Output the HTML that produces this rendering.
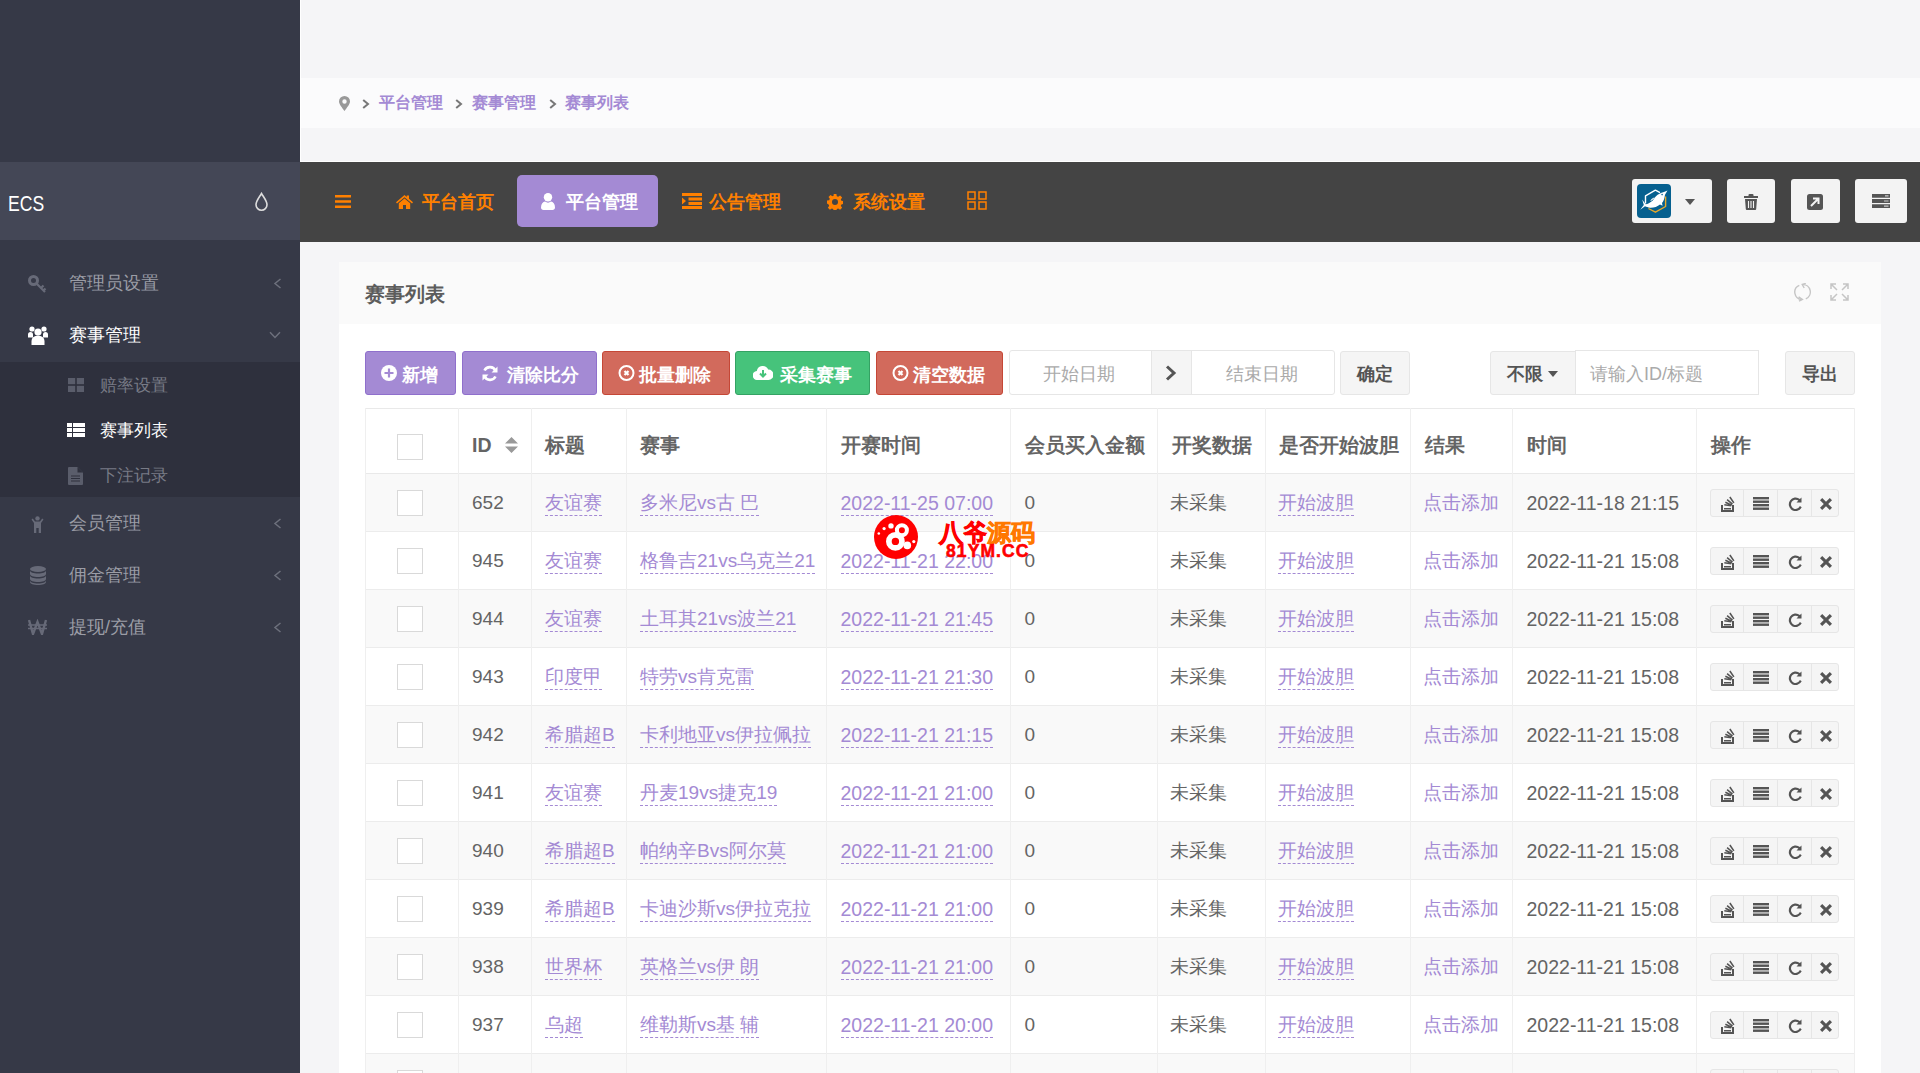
<!DOCTYPE html><html><head><meta charset="utf-8"><style>*{box-sizing:border-box;margin:0;padding:0}
html,body{width:1920px;height:1073px;overflow:hidden}
body{position:relative;background:#f5f5f7;font-family:"Liberation Sans",sans-serif;color:#646464}
.abs{position:absolute}
svg{position:absolute;display:block}
/* sidebar */
#sb{position:absolute;left:0;top:0;width:300px;height:1073px;background:#363947}
#sbh{position:absolute;left:0;top:162px;width:300px;height:78px;background:#444756}
#sbh .t{position:absolute;left:8px;top:186px;font-size:23px;line-height:32px;color:#fff}
.mi{position:absolute;left:69px;font-size:18px;line-height:24px;color:#9b9da6;white-space:nowrap}
.mi.on{color:#fff}
.si{position:absolute;left:100px;font-size:17px;line-height:24px;color:#787b86;white-space:nowrap}
.si.on{color:#fff}
#sub{position:absolute;left:0;top:362px;width:300px;height:135px;background:#2e303d}
/* top */
#wl{position:absolute;left:300px;top:0;width:1px;height:162px;background:#fff}
#bc{position:absolute;left:301px;top:78px;width:1619px;height:50px;background:#fbfbfc}
.bct{position:absolute;top:91px;font-size:16px;line-height:24px;color:#a48ad4;font-weight:bold;white-space:nowrap}
#nav{position:absolute;left:300px;top:162px;width:1620px;height:80px;background:#444}
#navl{position:absolute;left:300px;top:161px;width:1620px;height:1px;background:#fff}
.nt{position:absolute;top:189px;font-size:18px;line-height:26px;color:#ff8000;font-weight:bold;white-space:nowrap}
#navact{position:absolute;left:517px;top:175px;width:141px;height:52px;background:#a48ad4;border-radius:5px}
.rb{position:absolute;top:179px;height:44px;background:#f3f3f3;border-radius:3px}
/* panel */
#pn{position:absolute;left:339px;top:262px;width:1542px;height:811px;background:#fff}
#pnh{position:absolute;left:339px;top:262px;width:1542px;height:62px;background:#fafafa}
#pnt{position:absolute;left:365px;top:281px;font-size:20px;line-height:26px;color:#5c5c5c;font-weight:bold}
.btn{position:absolute;top:351px;height:44px;border-radius:3px;color:#fff;font-size:18px;font-weight:bold;line-height:42px;white-space:nowrap}
.btn span{position:absolute;top:2px}
.bp{background:#a48ad4;border:1px solid #8f6fcc}
.bd{background:#d26a5c;border:1px solid #c54736}
.bs{background:#46c37b;border:1px solid #34a263}
.ig{position:absolute;top:350px;height:45px;border:1px solid #e6e6e6;background:#fff;border-radius:3px}
.ph{position:absolute;font-size:18px;line-height:24px;color:#aaa;white-space:nowrap}
.gb{position:absolute;top:351px;height:44px;background:#f5f5f5;border:1px solid #e6e6e6;border-radius:3px;font-size:18px;font-weight:bold;color:#545454;line-height:44px;white-space:nowrap}
/* table */
.hrow{position:absolute;left:365px;width:1490px;background:#fff;border-top:1px solid #e9e9e9;border-bottom:1px solid #e9e9e9}
.row{position:absolute;left:365px;width:1490px;background:#fff;border-bottom:1px solid #ececec}
.row.odd{background:#f9f9f9}
.vl{position:absolute;width:1px;background:#efefef}
.th{position:absolute;font-size:19.5px;font-weight:bold;color:#646464;display:flex;align-items:center;white-space:nowrap;padding-top:9px}
.td{position:absolute;font-size:19px;color:#646464;display:flex;align-items:center;white-space:nowrap;padding-top:0px}
.td.lk,.td.pl{color:#a48ad4}
.td.lk span{border-bottom:1px dashed #a48ad4;line-height:24px}
.cb{position:absolute;width:26px;height:26px;border:1px solid #d9d9d9;background:#fff}
.ops{position:absolute;width:129px;height:28px;border:1px solid #e6e6e6;border-radius:3px;background:#f5f5f5}
.ops span{position:absolute;top:0;height:26px;border-right:1px solid #e6e6e6}
.ops svg{fill:#545454}
.o1{left:0;width:33px}.o2{left:33px;width:34px}.o3{left:67px;width:34px}.o4{left:101px;width:27px;border-right:none!important}
.o1 svg{left:9px;top:6px}.o2 svg{left:9px;top:7px}.o3 svg{left:10px;top:6px}.o4 svg{left:8px;top:8px}
/* watermark */
#wm{position:absolute;left:874px;top:515px;width:44px;height:44px;border-radius:50%;background:#f00}
.wmt{position:absolute;font-weight:bold;white-space:nowrap}

.dt{font-size:19.5px!important}
</style></head><body>
<svg width="0" height="0" style="position:absolute">
<defs>
<g id="i-so"><path d="M1 9h2v5h9V9h2v7H1z"/><path d="M4 12h7v1.6H4z M4.2 9.6l7 1 .2-1.6-7-1z M5 7l6.4 3 .7-1.5-6.4-3z M6.6 4.2l5.4 4.6 1-1.2L7.6 3z M9.2 1.5l4 5.8 1.3-.9-4-5.8z"/></g>
<g id="i-bars"><rect x="0" y="0" width="16" height="2.4"/><rect x="0" y="3.5" width="16" height="2.4"/><rect x="0" y="7" width="16" height="2.4"/><rect x="0" y="10.5" width="16" height="2.4"/></g>
<g id="i-rot"><path d="M13.5 1.5v5h-5l1.9-1.9A4.6 4.6 0 1 0 11.9 10l1.8 1.3A6.8 6.8 0 1 1 11.9 3z"/></g>
<g id="i-x"><path d="M2.2 0L6 3.8 9.8 0 12 2.2 8.2 6 12 9.8 9.8 12 6 8.2 2.2 12 0 9.8 3.8 6 0 2.2z"/></g>
</defs></svg>
<div id="sb"></div>
<div id="sbh"></div>
<div style="position:absolute;left:8px;top:189px;font-size:22px;line-height:30px;color:#fff;transform:scaleX(0.8);transform-origin:0 0">ECS</div>
<svg style="left:254px;top:192px" width="15" height="20" viewBox="0 0 15 20"><path d="M7.5 1.5C5.5 5 2 9 2 12.8A5.5 5.5 0 0 0 13 12.8C13 9 9.5 5 7.5 1.5Z" fill="none" stroke="#ddd" stroke-width="1.6"/></svg>
<div id="sub"></div>
<!-- menu -->
<svg style="left:28px;top:275px" width="19" height="18" viewBox="0 0 19 18"><circle cx="5.5" cy="5.5" r="4" fill="none" stroke="#676a78" stroke-width="3"/><path d="M8 8l9 9M13 13l2.5-2.5M15.5 15.5l2-2" stroke="#676a78" stroke-width="2.2"/></svg>
<div class="mi" style="top:271px">管理员设置</div>
<svg style="left:273px;top:278px" width="9" height="11" viewBox="0 0 9 11"><path d="M7.5 1L2 5.5 7.5 10" fill="none" stroke="#6d707c" stroke-width="1.5"/></svg>
<svg style="left:28px;top:326px" width="20" height="19" viewBox="0 0 20 19"><circle cx="4" cy="3" r="2.6" fill="#fff"/><circle cx="16" cy="3" r="2.6" fill="#fff"/><circle cx="10" cy="6" r="3.6" fill="#fff"/><path d="M0 8.5a2.5 2.5 0 0 1 5 0v3H0z M15 8.5a2.5 2.5 0 0 1 5 0v3h-5z M3.5 19v-4a6.5 5.5 0 0 1 13 0v4z" fill="#fff"/></svg>
<div class="mi on" style="top:323px">赛事管理</div>
<svg style="left:269px;top:331px" width="12" height="8" viewBox="0 0 12 8"><path d="M1 1.2L6 6.5 11 1.2" fill="none" stroke="#6d707c" stroke-width="1.5"/></svg>
<svg style="left:68px;top:378px" width="16" height="14" viewBox="0 0 16 14"><rect x="0" y="0" width="7.2" height="6.2" fill="#5a5d6b"/><rect x="8.8" y="0" width="7.2" height="6.2" fill="#5a5d6b"/><rect x="0" y="7.8" width="7.2" height="6.2" fill="#5a5d6b"/><rect x="8.8" y="7.8" width="7.2" height="6.2" fill="#5a5d6b"/></svg>
<div class="si" style="top:374px">赔率设置</div>
<svg style="left:67px;top:423px" width="18" height="14" viewBox="0 0 18 14"><path d="M0 0h5v4H0z M6 0h12v4H6z M0 5h5v4H0z M6 5h12v4H6z M0 10h5v4H0z M6 10h12v4H6z" fill="#fff"/></svg>
<div class="si on" style="top:419px">赛事列表</div>
<svg style="left:68px;top:467px" width="15" height="18" viewBox="0 0 15 18"><path d="M0 1a1 1 0 0 1 1-1h8.5L15 5.5V17a1 1 0 0 1-1 1H1a1 1 0 0 1-1-1z" fill="#5a5d6b"/><path d="M9.5 0v5.5H15" fill="#2e303d"/><path d="M3 9h9M3 11.5h9M3 14h9" stroke="#2e303d" stroke-width="1.2"/></svg>
<div class="si" style="top:464px">下注记录</div>
<svg style="left:31px;top:516px" width="13" height="17" viewBox="0 0 13 17"><circle cx="6.5" cy="2.4" r="2.2" fill="#676a78"/><path d="M0.5 3.5l1.3-.9L4 5.5h5l2.2-2.9 1.3.9L10 7v10H7.7v-5H5.3v5H3V7z" fill="#676a78"/></svg>
<div class="mi" style="top:511px">会员管理</div>
<svg style="left:273px;top:518px" width="9" height="11" viewBox="0 0 9 11"><path d="M7.5 1L2 5.5 7.5 10" fill="none" stroke="#6d707c" stroke-width="1.5"/></svg>
<svg style="left:30px;top:566px" width="16" height="19" viewBox="0 0 16 19"><ellipse cx="8" cy="3" rx="8" ry="3" fill="#676a78"/><path d="M0 4.5c0 1.7 3.6 3 8 3s8-1.3 8-3V8c0 1.7-3.6 3-8 3S0 9.7 0 8z M0 9.5c0 1.7 3.6 3 8 3s8-1.3 8-3V13c0 1.7-3.6 3-8 3s-8-1.3-8-3z M0 14.5c0 1.7 3.6 3 8 3s8-1.3 8-3V16c0 1.7-3.6 3-8 3s-8-1.3-8-3z" fill="#676a78"/></svg>
<div class="mi" style="top:563px">佣金管理</div>
<svg style="left:273px;top:570px" width="9" height="11" viewBox="0 0 9 11"><path d="M7.5 1L2 5.5 7.5 10" fill="none" stroke="#6d707c" stroke-width="1.5"/></svg>
<svg style="left:28px;top:619px" width="19" height="16" viewBox="0 0 19 16"><path d="M1 1l4 14 4.5-12 4.5 12 4-14" fill="none" stroke="#676a78" stroke-width="2.4"/><path d="M0 6h19M0 9.5h19" stroke="#676a78" stroke-width="1.6"/></svg>
<div class="mi" style="top:615px">提现/充值</div>
<svg style="left:273px;top:622px" width="9" height="11" viewBox="0 0 9 11"><path d="M7.5 1L2 5.5 7.5 10" fill="none" stroke="#6d707c" stroke-width="1.5"/></svg>

<div id="wl"></div>
<div id="bc"></div>
<svg style="left:339px;top:96px" width="11" height="15" viewBox="0 0 11 15"><path d="M5.5 0A5.5 5.5 0 0 0 0 5.5C0 8 3 11.5 5.5 15 8 11.5 11 8 11 5.5A5.5 5.5 0 0 0 5.5 0Zm0 3.3a2.2 2.2 0 1 1 0 4.4 2.2 2.2 0 0 1 0-4.4Z" fill="#999"/></svg>
<svg style="left:362px;top:99px" width="8" height="10" viewBox="0 0 8 10"><path d="M1.2 1L6 5 1.2 9" fill="none" stroke="#777" stroke-width="2"/></svg>
<div class="bct" style="left:379px">平台管理</div>
<svg style="left:455px;top:99px" width="8" height="10" viewBox="0 0 8 10"><path d="M1.2 1L6 5 1.2 9" fill="none" stroke="#777" stroke-width="2"/></svg>
<div class="bct" style="left:472px">赛事管理</div>
<svg style="left:549px;top:99px" width="8" height="10" viewBox="0 0 8 10"><path d="M1.2 1L6 5 1.2 9" fill="none" stroke="#777" stroke-width="2"/></svg>
<div class="bct" style="left:565px">赛事列表</div>

<div id="navl"></div>
<div id="nav"></div>
<svg style="left:335px;top:195px" width="16" height="13" viewBox="0 0 16 13"><path d="M0 0h16v2.6H0z M0 5.2h16v2.6H0z M0 10.4h16V13H0z" fill="#ff8000"/></svg>
<svg style="left:396px;top:195px" width="17" height="14" viewBox="0 0 17 14"><path d="M8.5 0L0 7.2 1 8.4 8.5 2.2 16 8.4 17 7.2 13 3.8V0.5h-2.3v1.4z M2.8 8.2L8.5 3.5 14.2 8.2V14H10V10H7V14H2.8z" fill="#ff8000"/></svg>
<div class="nt" style="left:422px">平台首页</div>
<div id="navact"></div>
<svg style="left:541px;top:193px" width="14" height="17" viewBox="0 0 14 17"><circle cx="7" cy="4.2" r="4.2" fill="#fff"/><path d="M0 14.5C0 11 2 9 4 8.6 5 9.4 6 9.7 7 9.7s2-.3 3-1.1C12 9 14 11 14 14.5 14 16 13 17 11.5 17h-9C1 17 0 16 0 14.5z" fill="#fff"/></svg>
<div class="nt" style="left:566px;color:#fff">平台管理</div>
<svg style="left:682px;top:193px" width="20" height="16" viewBox="0 0 20 16"><path d="M0 0h20v3H0z M6.5 4.5H20v3H6.5z M6.5 9H20v3H6.5z M0 13h20v3H0z M0 4.5l4 3.5-4 3.5z" fill="#ff8000"/></svg>
<div class="nt" style="left:709px">公告管理</div>
<svg style="left:827px;top:194px" width="16" height="16" viewBox="0 0 16 16"><path d="M6.6 0h2.8l.4 2.2 1.4.6 1.9-1.3 2 2-1.3 1.9.6 1.4 2.2.4v2.8l-2.2.4-.6 1.4 1.3 1.9-2 2-1.9-1.3-1.4.6-.4 2.2H6.6l-.4-2.2-1.4-.6-1.9 1.3-2-2 1.3-1.9-.6-1.4L0 9.4V6.6l2.2-.4.6-1.4-1.3-1.9 2-2 1.9 1.3 1.4-.6zM8 5a3 3 0 1 0 0 6 3 3 0 0 0 0-6z" fill="#ff8000"/></svg>
<div class="nt" style="left:853px">系统设置</div>
<svg style="left:967px;top:191px" width="20" height="19" viewBox="0 0 20 19"><path d="M1 1h7v7H1z M12 1h7v7h-7z M1 11h7v7H1z M12 11h7v7h-7z" fill="none" stroke="#ff8000" stroke-width="1.5"/></svg>

<div class="rb" style="left:1632px;width:80px"></div>
<div style="position:absolute;left:1637px;top:184px;width:34px;height:34px;background:#06608f;border-radius:4px"></div>
<svg style="left:1637px;top:184px" width="34" height="34" viewBox="0 0 34 34"><path d="M8.5 19.6V11.8L18.4 6.1 23 8.6" fill="none" stroke="#fff" stroke-width="1.4" stroke-linejoin="round"/><path d="M28.6 12.6V22.5L18.4 28.2 11.4 24.5" fill="none" stroke="#e8a92a" stroke-width="1.4" stroke-linejoin="round"/><path d="M3.2 25.8L6.8 21 5.2 15.5 8.6 20.2C10.5 20 13 19 15.8 16.5 17.5 13.5 19.5 11 23 9.4 25 8.6 27 8.2 30.5 6.6 29.5 8.5 28.5 9.6 27.9 11.2 27.5 14.5 26.6 17 25 19L25.6 21.8 23 20.6C20.5 22.8 16.5 24 13 23.8 11 23.6 9.5 22.6 8 22.2Z" fill="#fff"/><path d="M13.2 17C14 15.2 15.5 14 17.6 13.2 16.8 15 15.2 16.3 13.2 17Z" fill="#fff"/><circle cx="25.1" cy="10.6" r="0.8" fill="#06608f"/></svg>
<svg style="left:1685px;top:199px" width="10" height="6" viewBox="0 0 10 6"><path d="M0 0h10L5 6z" fill="#555"/></svg>
<div class="rb" style="left:1727px;width:48px"></div>
<svg style="left:1744px;top:194px" width="14" height="16" viewBox="0 0 14 16"><path d="M4.5 2V1a1 1 0 0 1 1-1h3a1 1 0 0 1 1 1v1H14v2H0V2z M1 5h12l-.8 10a1 1 0 0 1-1 1H2.8a1 1 0 0 1-1-1z" fill="#555"/><path d="M4.5 7v7M7 7v7M9.5 7v7" stroke="#f3f3f3" stroke-width="1.1"/></svg>
<div class="rb" style="left:1791px;width:49px"></div>
<svg style="left:1807px;top:194px" width="16" height="16" viewBox="0 0 16 16"><rect width="16" height="16" rx="2.5" fill="#555"/><path d="M4 12l7-7M6 4.5h5.5V10" fill="none" stroke="#f3f3f3" stroke-width="2"/></svg>
<div class="rb" style="left:1855px;width:52px"></div>
<svg style="left:1872px;top:194px" width="18" height="14" viewBox="0 0 18 14"><path d="M0 0h18v3.8H0z M0 5.1h18v3.8H0z M0 10.2h18V14H0z" fill="#555"/><path d="M13 1.9h3.5M12 7h4.5M12 12.1h4.5" stroke="#ccc" stroke-width="1.2"/></svg>

<div id="pn"></div>
<div id="pnh"></div>
<div id="pnt">赛事列表</div>
<svg style="left:1794px;top:283px" width="17" height="19" viewBox="0 0 17 19"><path d="M5.3 2.4A7.4 7.4 0 0 0 7.8 16.6 M8.6 1.6A7.4 7.4 0 0 1 11.8 15.8" fill="none" stroke="#c5c5c5" stroke-width="1.4"/><path d="M4.6 13.9L8.4 16.4 5 18.2 M11.8 0.3L8.2 1.5 10.2 5" fill="none" stroke="#c5c5c5" stroke-width="1.4"/></svg>
<svg style="left:1830px;top:283px" width="19" height="18" viewBox="0 0 19 18"><path d="M1 1l6 6M18 1l-6 6M1 17l6-6M18 17l-6-6 M1 6V1h5 M13 1h5v5 M1 12v5h5 M13 17h5v-5" fill="none" stroke="#c5c5c5" stroke-width="1.5"/></svg>

<div class="btn bp" style="left:365px;width:91px"><svg style="left:15px;top:13px" width="16" height="16" viewBox="0 0 16 16"><circle cx="8" cy="8" r="8" fill="#fff"/><path d="M8 3.5v9M3.5 8h9" stroke="#a48ad4" stroke-width="2.2"/></svg><span style="left:36px">新增</span></div>
<div class="btn bp" style="left:462px;width:135px"><svg style="left:19px;top:13px" width="16" height="17" viewBox="0 0 16 17"><path d="M13.5 6A6 6 0 0 0 2.5 5.5 M2.5 11a6 6 0 0 0 11 .5" fill="none" stroke="#fff" stroke-width="2.6"/><path d="M15.5 1.5v6h-6z M0.5 15.5v-6h6z" fill="#fff"/></svg><span style="left:44px">清除比分</span></div>
<div class="btn bd" style="left:602px;width:128px"><svg style="left:15px;top:12px" width="17" height="18" viewBox="0 0 17 18"><circle cx="8.5" cy="9" r="7" fill="none" stroke="#fff" stroke-width="2"/><path d="M6.5 7l4 4M10.5 7l-4 4" stroke="#fff" stroke-width="2.2"/></svg><span style="left:36px">批量删除</span></div>
<div class="btn bs" style="left:735px;width:135px"><svg style="left:17px;top:13px" width="20" height="15" viewBox="0 0 20 15"><path d="M4.5 15A4.5 4.5 0 0 1 3.8 6 6 6 0 0 1 15.2 4.6 5.2 5.2 0 0 1 15.5 15z" fill="#fff"/><path d="M10 5v6M7 8.5l3 3 3-3" fill="none" stroke="#46c37b" stroke-width="2"/></svg><span style="left:44px">采集赛事</span></div>
<div class="btn bd" style="left:876px;width:127px"><svg style="left:15px;top:12px" width="17" height="18" viewBox="0 0 17 18"><circle cx="8.5" cy="9" r="7" fill="none" stroke="#fff" stroke-width="2"/><path d="M6.5 7l4 4M10.5 7l-4 4" stroke="#fff" stroke-width="2.2"/></svg><span style="left:36px">清空数据</span></div>

<div class="ig" style="left:1009px;width:326px"></div>
<div style="position:absolute;left:1151px;top:351px;width:41px;height:43px;background:#f5f5f5;border-left:1px solid #e6e6e6;border-right:1px solid #e6e6e6"></div>
<svg style="left:1165px;top:365px" width="12" height="16" viewBox="0 0 12 16"><path d="M2 1.5L9 8 2 14.5" fill="none" stroke="#555" stroke-width="3"/></svg>
<div class="ph" style="left:1043px;top:362px">开始日期</div>
<div class="ph" style="left:1226px;top:362px">结束日期</div>
<div class="gb" style="left:1340px;width:70px"><span style="position:absolute;left:16px">确定</span></div>
<div class="gb" style="left:1490px;width:86px;border-radius:3px 0 0 3px"><span style="position:absolute;left:16px">不限</span></div>
<svg style="left:1548px;top:371px" width="10" height="6" viewBox="0 0 10 6"><path d="M0 0h10L5 6z" fill="#555"/></svg>
<div style="position:absolute;left:1575px;top:350px;width:184px;height:45px;border:1px solid #e6e6e6;background:#fff"></div>
<div class="ph" style="left:1590px;top:362px">请输入ID/标题</div>
<div class="gb" style="left:1785px;width:70px"><span style="position:absolute;left:16px">导出</span></div>

<div class="tbl">
<div class="hrow" style="top:408px;height:66px"></div>
<div class="row odd" style="top:474px;height:58px"></div>
<div class="row" style="top:532px;height:58px"></div>
<div class="row odd" style="top:590px;height:58px"></div>
<div class="row" style="top:648px;height:58px"></div>
<div class="row odd" style="top:706px;height:58px"></div>
<div class="row" style="top:764px;height:58px"></div>
<div class="row odd" style="top:822px;height:58px"></div>
<div class="row" style="top:880px;height:58px"></div>
<div class="row odd" style="top:938px;height:58px"></div>
<div class="row" style="top:996px;height:58px"></div>
<div class="row odd" style="top:1054px;height:58px"></div>
<div class="vl" style="left:364.5px;top:408px;height:665px"></div>
<div class="vl" style="left:457.5px;top:408px;height:665px"></div>
<div class="vl" style="left:530.5px;top:408px;height:665px"></div>
<div class="vl" style="left:625.5px;top:408px;height:665px"></div>
<div class="vl" style="left:826.0px;top:408px;height:665px"></div>
<div class="vl" style="left:1010.0px;top:408px;height:665px"></div>
<div class="vl" style="left:1157.0px;top:408px;height:665px"></div>
<div class="vl" style="left:1264.5px;top:408px;height:665px"></div>
<div class="vl" style="left:1410.0px;top:408px;height:665px"></div>
<div class="vl" style="left:1512.0px;top:408px;height:665px"></div>
<div class="vl" style="left:1696.0px;top:408px;height:665px"></div>
<div class="vl" style="left:1854.0px;top:408px;height:665px"></div>
<div class="cb" style="left:397px;top:434px"></div>
<div class="th" style="left:472.0px;top:408px;height:66px">ID</div>
<div class="th" style="left:545.0px;top:408px;height:66px">标题</div>
<div class="th" style="left:640.0px;top:408px;height:66px">赛事</div>
<div class="th" style="left:840.5px;top:408px;height:66px">开赛时间</div>
<div class="th" style="left:1024.5px;top:408px;height:66px">会员买入金额</div>
<div class="th" style="left:1171.5px;top:408px;height:66px">开奖数据</div>
<div class="th" style="left:1279.0px;top:408px;height:66px">是否开始波胆</div>
<div class="th" style="left:1424.5px;top:408px;height:66px">结果</div>
<div class="th" style="left:1526.5px;top:408px;height:66px">时间</div>
<div class="th" style="left:1710.5px;top:408px;height:66px">操作</div>
<svg class="sort" style="left:505px;top:437px" width="13" height="16" viewBox="0 0 13 16"><path d="M6.5 0L13 6.5H0Z M0 9.5H13L6.5 16Z" fill="#999"/></svg>
<div class="cb" style="left:397px;top:490px"></div>
<div class="td" style="left:472.0px;top:474px;height:58px"><span>652</span></div>
<div class="td lk" style="left:545.0px;top:474px;height:58px"><span>友谊赛</span></div>
<div class="td lk" style="left:640.0px;top:474px;height:58px"><span>多米尼vs古 巴</span></div>
<div class="td lk dt" style="left:840.5px;top:474px;height:58px"><span>2022-11-25 07:00</span></div>
<div class="td" style="left:1024.5px;top:474px;height:58px"><span>0</span></div>
<div class="td" style="left:1169.5px;top:474px;height:58px"><span>未采集</span></div>
<div class="td lk" style="left:1277.5px;top:474px;height:58px"><span>开始波胆</span></div>
<div class="td pl" style="left:1423.0px;top:474px;height:58px"><span>点击添加</span></div>
<div class="td dt" style="left:1526.5px;top:474px;height:58px"><span>2022-11-18 21:15</span></div>
<div class="ops" style="left:1710px;top:489px"><span class="o1"><svg width="15" height="16" viewBox="0 0 15 16"><use href="#i-so"/></svg></span><span class="o2"><svg width="16" height="13" viewBox="0 0 16 13"><use href="#i-bars"/></svg></span><span class="o3"><svg width="15" height="15" viewBox="0 0 15 15"><use href="#i-rot"/></svg></span><span class="o4"><svg width="12" height="12" viewBox="0 0 12 12"><use href="#i-x"/></svg></span></div>
<div class="cb" style="left:397px;top:548px"></div>
<div class="td" style="left:472.0px;top:532px;height:58px"><span>945</span></div>
<div class="td lk" style="left:545.0px;top:532px;height:58px"><span>友谊赛</span></div>
<div class="td lk" style="left:640.0px;top:532px;height:58px"><span>格鲁吉21vs乌克兰21</span></div>
<div class="td lk dt" style="left:840.5px;top:532px;height:58px"><span>2022-11-21 22:00</span></div>
<div class="td" style="left:1024.5px;top:532px;height:58px"><span>0</span></div>
<div class="td" style="left:1169.5px;top:532px;height:58px"><span>未采集</span></div>
<div class="td lk" style="left:1277.5px;top:532px;height:58px"><span>开始波胆</span></div>
<div class="td pl" style="left:1423.0px;top:532px;height:58px"><span>点击添加</span></div>
<div class="td dt" style="left:1526.5px;top:532px;height:58px"><span>2022-11-21 15:08</span></div>
<div class="ops" style="left:1710px;top:547px"><span class="o1"><svg width="15" height="16" viewBox="0 0 15 16"><use href="#i-so"/></svg></span><span class="o2"><svg width="16" height="13" viewBox="0 0 16 13"><use href="#i-bars"/></svg></span><span class="o3"><svg width="15" height="15" viewBox="0 0 15 15"><use href="#i-rot"/></svg></span><span class="o4"><svg width="12" height="12" viewBox="0 0 12 12"><use href="#i-x"/></svg></span></div>
<div class="cb" style="left:397px;top:606px"></div>
<div class="td" style="left:472.0px;top:590px;height:58px"><span>944</span></div>
<div class="td lk" style="left:545.0px;top:590px;height:58px"><span>友谊赛</span></div>
<div class="td lk" style="left:640.0px;top:590px;height:58px"><span>土耳其21vs波兰21</span></div>
<div class="td lk dt" style="left:840.5px;top:590px;height:58px"><span>2022-11-21 21:45</span></div>
<div class="td" style="left:1024.5px;top:590px;height:58px"><span>0</span></div>
<div class="td" style="left:1169.5px;top:590px;height:58px"><span>未采集</span></div>
<div class="td lk" style="left:1277.5px;top:590px;height:58px"><span>开始波胆</span></div>
<div class="td pl" style="left:1423.0px;top:590px;height:58px"><span>点击添加</span></div>
<div class="td dt" style="left:1526.5px;top:590px;height:58px"><span>2022-11-21 15:08</span></div>
<div class="ops" style="left:1710px;top:605px"><span class="o1"><svg width="15" height="16" viewBox="0 0 15 16"><use href="#i-so"/></svg></span><span class="o2"><svg width="16" height="13" viewBox="0 0 16 13"><use href="#i-bars"/></svg></span><span class="o3"><svg width="15" height="15" viewBox="0 0 15 15"><use href="#i-rot"/></svg></span><span class="o4"><svg width="12" height="12" viewBox="0 0 12 12"><use href="#i-x"/></svg></span></div>
<div class="cb" style="left:397px;top:664px"></div>
<div class="td" style="left:472.0px;top:648px;height:58px"><span>943</span></div>
<div class="td lk" style="left:545.0px;top:648px;height:58px"><span>印度甲</span></div>
<div class="td lk" style="left:640.0px;top:648px;height:58px"><span>特劳vs肯克雷</span></div>
<div class="td lk dt" style="left:840.5px;top:648px;height:58px"><span>2022-11-21 21:30</span></div>
<div class="td" style="left:1024.5px;top:648px;height:58px"><span>0</span></div>
<div class="td" style="left:1169.5px;top:648px;height:58px"><span>未采集</span></div>
<div class="td lk" style="left:1277.5px;top:648px;height:58px"><span>开始波胆</span></div>
<div class="td pl" style="left:1423.0px;top:648px;height:58px"><span>点击添加</span></div>
<div class="td dt" style="left:1526.5px;top:648px;height:58px"><span>2022-11-21 15:08</span></div>
<div class="ops" style="left:1710px;top:663px"><span class="o1"><svg width="15" height="16" viewBox="0 0 15 16"><use href="#i-so"/></svg></span><span class="o2"><svg width="16" height="13" viewBox="0 0 16 13"><use href="#i-bars"/></svg></span><span class="o3"><svg width="15" height="15" viewBox="0 0 15 15"><use href="#i-rot"/></svg></span><span class="o4"><svg width="12" height="12" viewBox="0 0 12 12"><use href="#i-x"/></svg></span></div>
<div class="cb" style="left:397px;top:722px"></div>
<div class="td" style="left:472.0px;top:706px;height:58px"><span>942</span></div>
<div class="td lk" style="left:545.0px;top:706px;height:58px"><span>希腊超B</span></div>
<div class="td lk" style="left:640.0px;top:706px;height:58px"><span>卡利地亚vs伊拉佩拉</span></div>
<div class="td lk dt" style="left:840.5px;top:706px;height:58px"><span>2022-11-21 21:15</span></div>
<div class="td" style="left:1024.5px;top:706px;height:58px"><span>0</span></div>
<div class="td" style="left:1169.5px;top:706px;height:58px"><span>未采集</span></div>
<div class="td lk" style="left:1277.5px;top:706px;height:58px"><span>开始波胆</span></div>
<div class="td pl" style="left:1423.0px;top:706px;height:58px"><span>点击添加</span></div>
<div class="td dt" style="left:1526.5px;top:706px;height:58px"><span>2022-11-21 15:08</span></div>
<div class="ops" style="left:1710px;top:721px"><span class="o1"><svg width="15" height="16" viewBox="0 0 15 16"><use href="#i-so"/></svg></span><span class="o2"><svg width="16" height="13" viewBox="0 0 16 13"><use href="#i-bars"/></svg></span><span class="o3"><svg width="15" height="15" viewBox="0 0 15 15"><use href="#i-rot"/></svg></span><span class="o4"><svg width="12" height="12" viewBox="0 0 12 12"><use href="#i-x"/></svg></span></div>
<div class="cb" style="left:397px;top:780px"></div>
<div class="td" style="left:472.0px;top:764px;height:58px"><span>941</span></div>
<div class="td lk" style="left:545.0px;top:764px;height:58px"><span>友谊赛</span></div>
<div class="td lk" style="left:640.0px;top:764px;height:58px"><span>丹麦19vs捷克19</span></div>
<div class="td lk dt" style="left:840.5px;top:764px;height:58px"><span>2022-11-21 21:00</span></div>
<div class="td" style="left:1024.5px;top:764px;height:58px"><span>0</span></div>
<div class="td" style="left:1169.5px;top:764px;height:58px"><span>未采集</span></div>
<div class="td lk" style="left:1277.5px;top:764px;height:58px"><span>开始波胆</span></div>
<div class="td pl" style="left:1423.0px;top:764px;height:58px"><span>点击添加</span></div>
<div class="td dt" style="left:1526.5px;top:764px;height:58px"><span>2022-11-21 15:08</span></div>
<div class="ops" style="left:1710px;top:779px"><span class="o1"><svg width="15" height="16" viewBox="0 0 15 16"><use href="#i-so"/></svg></span><span class="o2"><svg width="16" height="13" viewBox="0 0 16 13"><use href="#i-bars"/></svg></span><span class="o3"><svg width="15" height="15" viewBox="0 0 15 15"><use href="#i-rot"/></svg></span><span class="o4"><svg width="12" height="12" viewBox="0 0 12 12"><use href="#i-x"/></svg></span></div>
<div class="cb" style="left:397px;top:838px"></div>
<div class="td" style="left:472.0px;top:822px;height:58px"><span>940</span></div>
<div class="td lk" style="left:545.0px;top:822px;height:58px"><span>希腊超B</span></div>
<div class="td lk" style="left:640.0px;top:822px;height:58px"><span>帕纳辛Bvs阿尔莫</span></div>
<div class="td lk dt" style="left:840.5px;top:822px;height:58px"><span>2022-11-21 21:00</span></div>
<div class="td" style="left:1024.5px;top:822px;height:58px"><span>0</span></div>
<div class="td" style="left:1169.5px;top:822px;height:58px"><span>未采集</span></div>
<div class="td lk" style="left:1277.5px;top:822px;height:58px"><span>开始波胆</span></div>
<div class="td pl" style="left:1423.0px;top:822px;height:58px"><span>点击添加</span></div>
<div class="td dt" style="left:1526.5px;top:822px;height:58px"><span>2022-11-21 15:08</span></div>
<div class="ops" style="left:1710px;top:837px"><span class="o1"><svg width="15" height="16" viewBox="0 0 15 16"><use href="#i-so"/></svg></span><span class="o2"><svg width="16" height="13" viewBox="0 0 16 13"><use href="#i-bars"/></svg></span><span class="o3"><svg width="15" height="15" viewBox="0 0 15 15"><use href="#i-rot"/></svg></span><span class="o4"><svg width="12" height="12" viewBox="0 0 12 12"><use href="#i-x"/></svg></span></div>
<div class="cb" style="left:397px;top:896px"></div>
<div class="td" style="left:472.0px;top:880px;height:58px"><span>939</span></div>
<div class="td lk" style="left:545.0px;top:880px;height:58px"><span>希腊超B</span></div>
<div class="td lk" style="left:640.0px;top:880px;height:58px"><span>卡迪沙斯vs伊拉克拉</span></div>
<div class="td lk dt" style="left:840.5px;top:880px;height:58px"><span>2022-11-21 21:00</span></div>
<div class="td" style="left:1024.5px;top:880px;height:58px"><span>0</span></div>
<div class="td" style="left:1169.5px;top:880px;height:58px"><span>未采集</span></div>
<div class="td lk" style="left:1277.5px;top:880px;height:58px"><span>开始波胆</span></div>
<div class="td pl" style="left:1423.0px;top:880px;height:58px"><span>点击添加</span></div>
<div class="td dt" style="left:1526.5px;top:880px;height:58px"><span>2022-11-21 15:08</span></div>
<div class="ops" style="left:1710px;top:895px"><span class="o1"><svg width="15" height="16" viewBox="0 0 15 16"><use href="#i-so"/></svg></span><span class="o2"><svg width="16" height="13" viewBox="0 0 16 13"><use href="#i-bars"/></svg></span><span class="o3"><svg width="15" height="15" viewBox="0 0 15 15"><use href="#i-rot"/></svg></span><span class="o4"><svg width="12" height="12" viewBox="0 0 12 12"><use href="#i-x"/></svg></span></div>
<div class="cb" style="left:397px;top:954px"></div>
<div class="td" style="left:472.0px;top:938px;height:58px"><span>938</span></div>
<div class="td lk" style="left:545.0px;top:938px;height:58px"><span>世界杯</span></div>
<div class="td lk" style="left:640.0px;top:938px;height:58px"><span>英格兰vs伊 朗</span></div>
<div class="td lk dt" style="left:840.5px;top:938px;height:58px"><span>2022-11-21 21:00</span></div>
<div class="td" style="left:1024.5px;top:938px;height:58px"><span>0</span></div>
<div class="td" style="left:1169.5px;top:938px;height:58px"><span>未采集</span></div>
<div class="td lk" style="left:1277.5px;top:938px;height:58px"><span>开始波胆</span></div>
<div class="td pl" style="left:1423.0px;top:938px;height:58px"><span>点击添加</span></div>
<div class="td dt" style="left:1526.5px;top:938px;height:58px"><span>2022-11-21 15:08</span></div>
<div class="ops" style="left:1710px;top:953px"><span class="o1"><svg width="15" height="16" viewBox="0 0 15 16"><use href="#i-so"/></svg></span><span class="o2"><svg width="16" height="13" viewBox="0 0 16 13"><use href="#i-bars"/></svg></span><span class="o3"><svg width="15" height="15" viewBox="0 0 15 15"><use href="#i-rot"/></svg></span><span class="o4"><svg width="12" height="12" viewBox="0 0 12 12"><use href="#i-x"/></svg></span></div>
<div class="cb" style="left:397px;top:1012px"></div>
<div class="td" style="left:472.0px;top:996px;height:58px"><span>937</span></div>
<div class="td lk" style="left:545.0px;top:996px;height:58px"><span>乌超</span></div>
<div class="td lk" style="left:640.0px;top:996px;height:58px"><span>维勒斯vs基 辅</span></div>
<div class="td lk dt" style="left:840.5px;top:996px;height:58px"><span>2022-11-21 20:00</span></div>
<div class="td" style="left:1024.5px;top:996px;height:58px"><span>0</span></div>
<div class="td" style="left:1169.5px;top:996px;height:58px"><span>未采集</span></div>
<div class="td lk" style="left:1277.5px;top:996px;height:58px"><span>开始波胆</span></div>
<div class="td pl" style="left:1423.0px;top:996px;height:58px"><span>点击添加</span></div>
<div class="td dt" style="left:1526.5px;top:996px;height:58px"><span>2022-11-21 15:08</span></div>
<div class="ops" style="left:1710px;top:1011px"><span class="o1"><svg width="15" height="16" viewBox="0 0 15 16"><use href="#i-so"/></svg></span><span class="o2"><svg width="16" height="13" viewBox="0 0 16 13"><use href="#i-bars"/></svg></span><span class="o3"><svg width="15" height="15" viewBox="0 0 15 15"><use href="#i-rot"/></svg></span><span class="o4"><svg width="12" height="12" viewBox="0 0 12 12"><use href="#i-x"/></svg></span></div>
<div class="cb" style="left:397px;top:1070px"></div>
<div class="ops" style="left:1710px;top:1069px"><span class="o1"></span><span class="o2"></span><span class="o3"></span><span class="o4"></span></div>
</div>
<svg style="left:874px;top:515px" width="44" height="44" viewBox="0 0 44 44"><circle cx="22" cy="22" r="22" fill="#f00"/><circle cx="21.4" cy="26.4" r="6.55" fill="none" stroke="#fff" stroke-width="5.7"/><circle cx="27.9" cy="15.2" r="5" fill="none" stroke="#fff" stroke-width="4"/><circle cx="17" cy="10.9" r="2.7" fill="#fff"/><circle cx="10.1" cy="13.6" r="1.6" fill="#fff"/><circle cx="4.8" cy="18.5" r="1.3" fill="#fff"/><circle cx="33.3" cy="30.4" r="3.8" fill="#fff"/><circle cx="39.8" cy="26.6" r="1.6" fill="#fff"/></svg>
<div class="wmt" style="left:939px;top:517px;font-size:24px;line-height:32px;color:#f00;-webkit-text-stroke:0.7px #f00">八爷<span style="color:#ff7800;-webkit-text-stroke:0.7px #ff7800">源码</span></div>
<div class="wmt" style="left:946px;top:541px;font-size:17.5px;line-height:20px;color:#f00;-webkit-text-stroke:0.6px #f00;letter-spacing:1.1px">81YM.CC</div>

</body></html>
